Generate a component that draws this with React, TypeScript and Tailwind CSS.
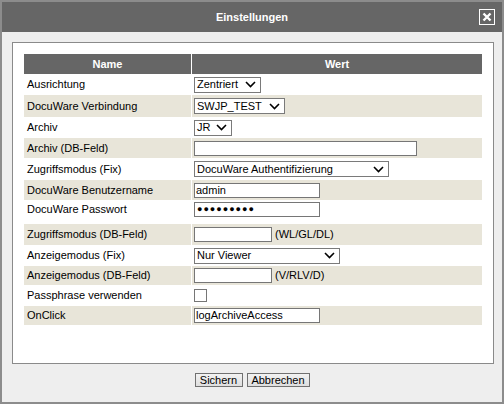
import React from 'react';

type Row = {
  label: string;
  h: string;
  beige?: boolean;
  shift?: boolean;
  value: React.ReactNode;
};

function Chevron() {
  return (
    <svg width="11" height="7" viewBox="0 0 11 7" fill="none" stroke="#000" strokeWidth="1.6">
      <polyline points="1,1 5.5,5.5 10,1" />
    </svg>
  );
}

function FakeSelect({ text, w }: { text: string; w: string }) {
  return (
    <div
      className={`${w} flex h-[16px] items-center justify-between border border-[#7a7a7a] bg-white pl-[2px] pr-[4px] leading-none text-black`}
    >
      <span>{text}</span>
      <Chevron />
    </div>
  );
}

function TextBox({ value = '', w }: { value?: string; w: string }) {
  return (
    <div
      className={`${w} flex h-[15px] items-center border border-[#767676] bg-white pl-[1px] leading-none text-black`}
    >
      {value}
    </div>
  );
}

function PasswordBox({ w }: { w: string }) {
  return (
    <div
      className={`${w} flex h-[15px] items-center border border-[#767676] bg-white pl-[2px] text-[9px] leading-none tracking-[1px] text-black`}
    >
      ●●●●●●●●●
    </div>
  );
}

const rows: Row[] = [
  { label: 'Ausrichtung', h: 'h-[19px]', value: <FakeSelect text="Zentriert" w="w-[67px]" /> },
  { label: 'DocuWare Verbindung', h: 'h-[22px]', beige: true, value: <FakeSelect text="SWJP_TEST" w="w-[91px]" /> },
  { label: 'Archiv', h: 'h-[19px]', value: <FakeSelect text="JR" w="w-[38px]" /> },
  { label: 'Archiv (DB-Feld)', h: 'h-[20px]', beige: true, value: <TextBox w="w-[223px]" /> },
  {
    label: 'Zugriffsmodus (Fix)',
    h: 'h-[20px]',
    value: <FakeSelect text="DocuWare Authentifizierung" w="w-[195px]" />,
  },
  { label: 'DocuWare Benutzername', h: 'h-[20px]', beige: true, value: <TextBox value="admin" w="w-[126px]" /> },
  { label: 'DocuWare Passwort', h: 'h-[22px]', shift: true, value: <PasswordBox w="w-[126px]" /> },
  {
    label: 'Zugriffsmodus (DB-Feld)',
    h: 'h-[21px]',
    beige: true,
    value: (
      <div className="flex items-center">
        <TextBox w="w-[78px]" />
        <span className="ml-[3px]">(WL/GL/DL)</span>
      </div>
    ),
  },
  { label: 'Anzeigemodus (Fix)', h: 'h-[19px]', value: <FakeSelect text="Nur Viewer" w="w-[146px]" /> },
  {
    label: 'Anzeigemodus (DB-Feld)',
    h: 'h-[19px]',
    beige: true,
    value: (
      <div className="flex items-center">
        <TextBox w="w-[78px]" />
        <span className="ml-[3px]">(V/RLV/D)</span>
      </div>
    ),
  },
  {
    label: 'Passphrase verwenden',
    h: 'h-[19px]',
    value: <div className="h-[13px] w-[13px] border border-[#767676] bg-white" />,
  },
  { label: 'OnClick', h: 'h-[19px]', beige: true, value: <TextBox value="logArchiveAccess" w="w-[126px]" /> },
];

export default function App() {
  return (
    <div className="h-[404px] w-[504px] bg-[#8c8c8c] p-[2px] font-['Liberation_Sans',Arial,sans-serif] text-[11px] text-black">
      <div className="flex h-full flex-col bg-[#eeeeee]">
        {/* Title bar */}
        <div className="relative flex h-[30px] shrink-0 items-center justify-center bg-[#666666]">
          <span className="font-bold text-white">Einstellungen</span>
          <div className="absolute right-[7px] top-[7px] flex h-[16px] w-[16px] items-center justify-center border border-white">
            <svg width="10" height="10" viewBox="0 0 10 10" stroke="#fff" strokeWidth="2.4">
              <path d="M1.5 1.5 L8.5 8.5 M8.5 1.5 L1.5 8.5" />
            </svg>
          </div>
        </div>

        {/* Panel */}
        <div className="ml-[10px] mt-[10px] h-[322px] w-[482px] border border-[#8a8a8a] bg-white pl-[11px] pt-[11px]">
          <div className="flex w-[458px] flex-col gap-[1px]">
            <div className="flex h-[20px] gap-[1px] font-bold text-white">
              <div className="flex w-[167px] items-center justify-center bg-[#666666]">Name</div>
              <div className="flex flex-1 items-center justify-center bg-[#666666]">Wert</div>
            </div>
            {rows.map((r) => (
              <div key={r.label} className={`flex gap-[1px] ${r.h}`}>
                <div
                  className={`flex w-[167px] items-center pl-[3px] ${r.beige ? 'bg-[#e8e5d9]' : ''} ${
                    r.shift ? 'pb-[5px]' : ''
                  }`}
                >
                  {r.label}
                </div>
                <div
                  className={`flex flex-1 items-center pl-[2px] ${r.beige ? 'bg-[#e8e5d9]' : ''} ${
                    r.shift ? 'pb-[5px]' : ''
                  }`}
                >
                  {r.value}
                </div>
              </div>
            ))}
          </div>
        </div>

        {/* Buttons */}
        <div className="mt-[9px] flex justify-center gap-[4px]">
          <button className="flex h-[14px] w-[48px] items-center justify-center border border-[#707070] bg-gradient-to-b from-[#f2f2f2] to-[#dedede] leading-none">
            Sichern
          </button>
          <button className="flex h-[14px] w-[63px] items-center justify-center border border-[#707070] bg-gradient-to-b from-[#f2f2f2] to-[#dedede] leading-none">
            Abbrechen
          </button>
        </div>
      </div>
    </div>
  );
}
